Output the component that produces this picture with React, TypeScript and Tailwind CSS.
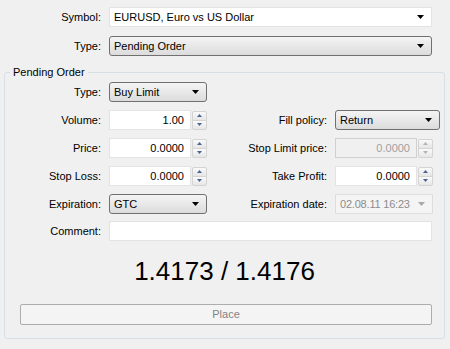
import React from 'react';

const font = { fontFamily: '"Liberation Sans", Arial, sans-serif' };

function Arrow({ disabled }: { disabled?: boolean }) {
  return (
    <svg width="7" height="4" viewBox="0 0 7 4" className="shrink-0">
      <path d="M0 0h7L3.5 4z" fill={disabled ? '#a9a9a9' : '#000'} />
    </svg>
  );
}

function Combo({
  text,
  className,
  kind = 'button',
}: {
  text: string;
  className: string;
  kind?: 'white' | 'button' | 'disabled';
}) {
  const look =
    kind === 'white'
      ? 'bg-white border-[#e3e3e3] text-black'
      : kind === 'disabled'
        ? 'bg-[#f4f4f4] border-[#dedede] text-[#8c8c8c] tracking-[-0.2px]'
        : 'bg-gradient-to-b from-[#f4f4f4] to-[#dcdcdc] border-[#707070] rounded-[3px] text-black';
  return (
    <div className={`h-5 flex items-center justify-between pl-[4px] pr-[7px] border ${look} ${className}`}>
      <span className="whitespace-nowrap">{text}</span>
      <Arrow disabled={kind === 'disabled'} />
    </div>
  );
}

function Spin({ disabled }: { disabled?: boolean }) {
  const c = disabled ? '#b4b4b4' : '#4d6195';
  const box = 'h-[10px] w-[15px] flex items-center justify-center border border-[#d4d4d4] bg-gradient-to-b from-[#fafafa] to-[#e6e6e6]';
  return (
    <div className="flex flex-col ml-px">
      <div className={`${box} rounded-t-[2px]`}>
        <svg width="5" height="3" viewBox="0 0 5 3">
          <path d="M0 3h5L2.5 0z" fill={c} />
        </svg>
      </div>
      <div className={`${box} rounded-b-[2px] -mt-px`}>
        <svg width="5" height="3" viewBox="0 0 5 3">
          <path d="M0 0h5L2.5 3z" fill={c} />
        </svg>
      </div>
    </div>
  );
}

function Num({ value, disabled }: { value: string; disabled?: boolean }) {
  return (
    <div className="flex items-center">
      <div
        className={`h-5 w-[82px] border flex items-center justify-end pr-[6px] ${
          disabled ? 'bg-[#f0f0f0] border-[#d0d0d0] text-[#a0a0a0]' : 'bg-white border-[#e3e3e3] text-black'
        }`}
      >
        {value}
      </div>
      <Spin disabled={disabled} />
    </div>
  );
}

function Label({ children, w }: { children: React.ReactNode; w: string }) {
  return <div className={`${w} shrink-0 text-right pr-2`}>{children}</div>;
}

export default function App() {
  return (
    <div className="w-[450px] h-[349px] bg-[#f0f0f0] text-[11px] text-black overflow-hidden" style={font}>
      {/* Top selectors */}
      <div className="pt-[7px] flex flex-col gap-[9px]">
        <div className="flex items-center">
          <Label w="w-[109px]">Symbol:</Label>
          <Combo kind="white" text="EURUSD, Euro vs US Dollar" className="w-[323px]" />
        </div>
        <div className="flex items-center">
          <Label w="w-[109px]">Type:</Label>
          <Combo text="Pending Order" className="w-[323px]" />
        </div>
      </div>

      {/* Pending Order group */}
      <div className="relative ml-[4px] mt-[16px] w-[441px] h-[267px] border border-[#d5dfe5] rounded-[3px]">
        <span className="absolute left-[5px] -top-[7px] px-[3px] bg-[#f0f0f0] leading-[13px]">
          Pending Order
        </span>

        <div className="pt-[9px] flex flex-col gap-2">
          <div className="flex items-center">
            <Label w="w-[104px]">Type:</Label>
            <Combo text="Buy Limit" className="w-[98px]" />
          </div>

          <div className="flex items-center">
            <Label w="w-[104px]">Volume:</Label>
            <Num value="1.00" />
            <Label w="w-[128px]">Fill policy:</Label>
            <Combo text="Return" className="w-[105px]" />
          </div>

          <div className="flex items-center">
            <Label w="w-[104px]">Price:</Label>
            <Num value="0.0000" />
            <Label w="w-[128px]">Stop Limit price:</Label>
            <Num value="0.0000" disabled />
          </div>

          <div className="flex items-center">
            <Label w="w-[104px]">Stop Loss:</Label>
            <Num value="0.0000" />
            <Label w="w-[128px]">Take Profit:</Label>
            <Num value="0.0000" />
          </div>

          <div className="flex items-center">
            <Label w="w-[104px]">Expiration:</Label>
            <Combo text="GTC" className="w-[98px]" />
            <Label w="w-[128px]">Expiration date:</Label>
            <Combo kind="disabled" text="02.08.11 16:23" className="w-[98px]" />
          </div>

          <div className="flex items-center -mt-px">
            <Label w="w-[104px]">Comment:</Label>
            <div className="h-5 w-[323px] bg-white border border-[#e3e3e3]" />
          </div>
        </div>

        <div className="mt-[15px] text-center text-[26px] leading-[30px]">1.4173 / 1.4176</div>

        <div className="mt-[18px] mx-[15px] h-[21px] w-[412px] border border-[#adadad] rounded-[2px] bg-[#f4f4f4] flex items-center justify-center text-[#838383]">
          Place
        </div>
      </div>
    </div>
  );
}
